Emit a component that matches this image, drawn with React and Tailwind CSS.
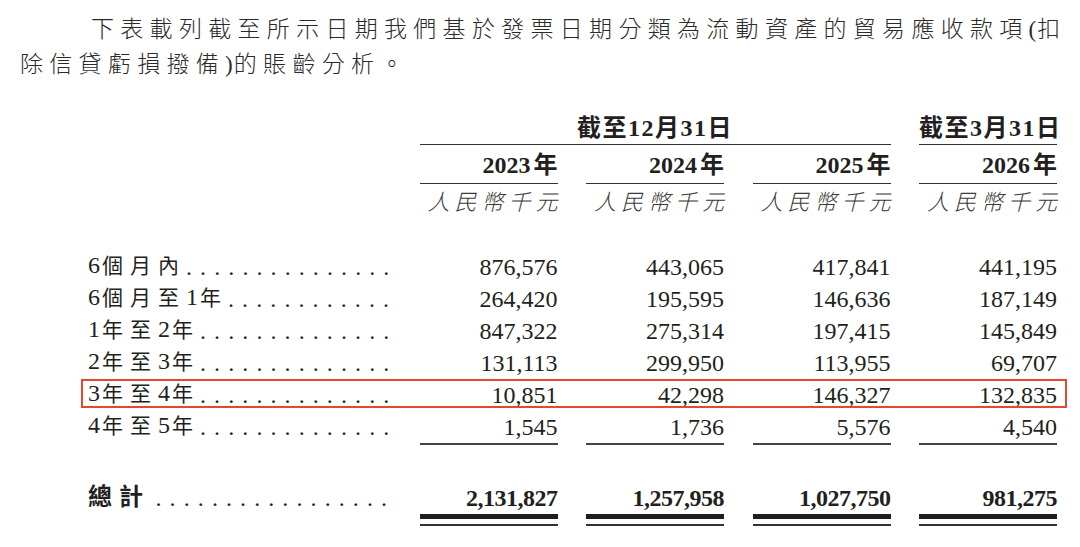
import React from 'react';

const rows = [
  ['6個月內', 15, '876,576', '443,065', '417,841', '441,195'],
  ['6個月至1年', 12, '264,420', '195,595', '146,636', '187,149'],
  ['1年至2年', 14, '847,322', '275,314', '197,415', '145,849'],
  ['2年至3年', 14, '131,113', '299,950', '113,955', '69,707'],
  ['3年至4年', 14, '10,851', '42,298', '146,327', '132,835'],
  ['4年至5年', 14, '1,545', '1,736', '5,576', '4,540'],
];

const totals = ['2,131,827', '1,257,958', '1,027,750', '981,275'];
const years = ['2023', '2024', '2025', '2026'];

// same column template for every row of the table
const grid = 'grid grid-cols-[303px_138px_138px_138px_138px] gap-x-[28.5px] pl-[88px]';

// digits at full size, chinese a bit smaller and spaced out
const Label = ({ text, bold }) => (
  <span className="shrink-0 whitespace-nowrap">
    {text.split(/(\d+)/).filter(Boolean).map((part, i) =>
      /\d/.test(part) ? (
        <span key={i} className="text-[24px] mr-[2px]">{part}</span>
      ) : (
        <span key={i} className={bold ? 'text-[24px] font-bold tracking-[7px]' : 'text-[21px] tracking-[7px]'}>{part}</span>
      )
    )}
  </span>
);

// leader dots, right aligned so they all end at the same x
const Dots = ({ count }) => (
  <span className="ml-auto shrink-0 flex gap-[8.1px] text-[24px]">
    {Array.from({ length: count }, (_, i) => (
      <span key={i}>.</span>
    ))}
  </span>
);

const Row = ({ label, dots, values, bold }) => (
  <div className={`${grid} h-[32px] items-center leading-[32px]`}>
    <div className="flex items-center pr-[4px]">
      <Label text={label} bold={bold} />
      <Dots count={dots} />
    </div>
    {values.map((v, i) => (
      <div key={i} className={`text-right whitespace-nowrap text-[24px] ${bold ? 'font-bold tracking-[-0.5px]' : ''}`}>{v}</div>
    ))}
  </div>
);

export default function App() {
  return (
    <div className="w-[1080px] h-[547px] bg-white overflow-hidden text-[#231f20] font-['Liberation_Serif','Noto_Sans_CJK_TC',serif]">
      {/* intro paragraph */}
      <p className="pt-[12px] pl-[20px] text-[23px] leading-[35px] tracking-[6.3px] font-light text-[#2a2a2a] whitespace-nowrap">
        <span className="pl-[71px]">下表載列截至所示日期我們基於發票日期分類為流動資產的貿易應收款項<span className="tracking-[1px]">(</span>扣</span>
        <br />
        除信貸虧損撥備<span className="tracking-[1px]">)</span>的賬齡分析。
      </p>

      {/* header */}
      <div className={`${grid} mt-[30px] font-bold text-[24px] leading-[32px] whitespace-nowrap`}>
        <div />
        <div className="col-span-3 text-center tracking-[1.5px] border-b-[1.5px] border-[#333]">截至12月31日</div>
        <div className="text-right border-b-[1.5px] border-[#333]">
          <span className="tracking-[1.5px] mr-[-1.5px]">截至3月31日</span>
        </div>
      </div>
      <div className={`${grid} pt-[4px] font-bold text-[24px] leading-[32px] whitespace-nowrap`}>
        <div />
        {years.map((y) => (
          <div key={y} className="text-right pb-[2px] border-b-[1.5px] border-[#333]">
            {y}<span className="ml-[3px]">年</span>
          </div>
        ))}
      </div>
      <div className={`${grid} pt-[3px] text-[22px] leading-[32px] italic text-[#3a3a3a] whitespace-nowrap`}>
        <div />
        {years.map((y) => (
          <div key={y} className="text-right">
            <span className="tracking-[5px] mr-[-5px] font-light">人民幣千元</span>
          </div>
        ))}
      </div>

      {/* body */}
      <div className="mt-[30px]">
        {rows.map((r) =>
          r[0] === '3年至4年' ? (
            <div key={r[0]} className="relative">
              <Row label={r[0]} dots={r[1]} values={r.slice(2)} />
              <div className="absolute left-[81px] w-[986px] top-[2px] bottom-[1px] border-2 border-[#e8472f] pointer-events-none" />
            </div>
          ) : (
            <Row key={r[0]} label={r[0]} dots={r[1]} values={r.slice(2)} />
          )
        )}
      </div>
      <div className={`${grid} mt-[2px]`}>
        <div />
        {years.map((y) => (
          <div key={y} className="h-[1.5px] bg-[#444]" />
        ))}
      </div>

      {/* total */}
      <div className="mt-[36px]">
        <Row label="總計" dots={17} values={totals} bold />
      </div>
      <div className={`${grid} mt-[1px]`}>
        <div />
        {years.map((y) => (
          <div key={y} className="flex flex-col gap-[5px]">
            <div className="h-[5px] bg-[#1f1f1f]" />
            <div className="h-[2px] bg-[#333]" />
          </div>
        ))}
      </div>
    </div>
  );
}
